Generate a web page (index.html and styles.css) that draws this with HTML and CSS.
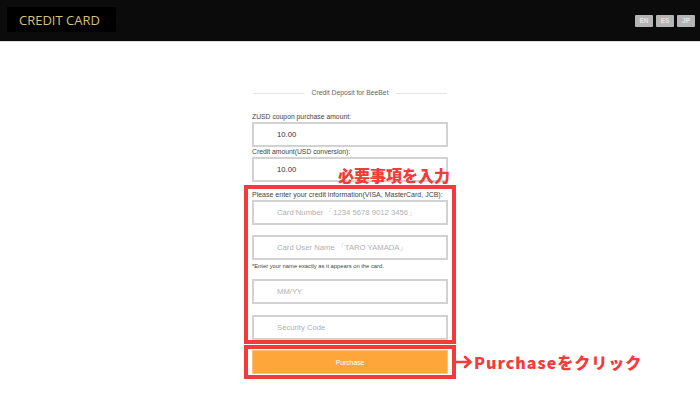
FILE: index.html
```html
<!DOCTYPE html>
<html lang="en">
<head>
<meta charset="utf-8">
<title>Credit Card</title>
<link rel="stylesheet" href="styles.css">
</head>
<body>
<header class="topbar">
  <div class="logo">CREDIT CARD</div>
  <nav class="langs">
    <span class="lang">EN</span>
    <span class="lang">ES</span>
    <span class="lang">JP</span>
  </nav>
</header>
<main class="form">
  <div class="title"><span class="rule"></span><span class="title-text">Credit Deposit for BeeBet</span><span class="rule"></span></div>
  <div class="label first">ZUSD coupon purchase amount:</div>
  <div class="field value">10.00</div>
  <div class="label">Credit amount(USD conversion):</div>
  <div class="field value">10.00</div>
  <section class="mark card-section">
    <div class="note-jp">必要事項を入力</div>
    <div class="label">Please enter your credit information(VISA, MasterCard, JCB):</div>
    <div class="field ph f-card">Card Number 「1234 5678 9012 3456」</div>
    <div class="field ph f-name">Card User Name 「TARO YAMADA」</div>
    <div class="hint">*Enter your name exactly as it appears on the card.</div>
    <div class="field ph f-exp">MM/YY</div>
    <div class="field ph f-cvc">Security Code</div>
  </section>
  <div class="mark buy-wrap">
    <button class="buy">Purchase</button>
    <div class="note-click">
      <svg class="arrow" width="17" height="14" viewBox="0 0 17 14"><path d="M0 7H14M9 2L14.5 7L9 12" fill="none" stroke="#f23b3b" stroke-width="2.6" stroke-linecap="round" stroke-linejoin="round"/></svg>
      <span>Purchaseをクリック</span>
    </div>
  </div>
</main>
</body>
</html>
```
FILE: styles.css
```css
html, body {
  margin: 0;
  padding: 0;
  background: #fff;
}
body {
  font-family: "Liberation Sans", Arial, sans-serif;
  width: 700px;
  height: 400px;
  overflow: hidden;
}
.topbar {
  height: 42px;
  background: #0b0b0b;
  display: flex;
  justify-content: space-between;
  align-items: flex-start;
  box-sizing: border-box;
  padding: 7px 5px 0 7px;
  border-bottom: 1px solid #d8d8d8;
}
.logo {
  width: 97px;
  height: 25px;
  padding-left: 12px;
  background: #000;
  color: #d7c077;
  font-family: "Open Sans", "Noto Sans", sans-serif;
  font-size: 13px;
  line-height: 26px;
}
.langs {
  display: flex;
  gap: 3px;
  margin-top: 8px;
}
.lang {
  width: 18px;
  height: 12px;
  background: #b4b4b4;
  color: #e6e6e6;
  font-size: 6.5px;
  font-weight: bold;
  line-height: 12px;
  text-align: center;
  border-radius: 1px;
}
.form {
  width: 196px;
  margin: 0 auto;
  padding-top: 46px;
}
.title {
  display: flex;
  align-items: center;
  height: 10px;
  gap: 6px;
}
.rule {
  flex: 1;
  height: 1px;
  background: #e4e4e4;
  margin: 0 1px;
}
.title-text {
  font-size: 6.8px;
  color: #666;
  line-height: 10px;
}
.label {
  font-size: 6.8px;
  line-height: 10px;
  color: #444;
  white-space: nowrap;
}
.label.first {
  margin-top: 14px;
}
.field {
  height: 25px;
  box-sizing: border-box;
  border: 2px solid #d2d2d2;
  padding-left: 23px;
  font-size: 7.7px;
  line-height: 21px;
  white-space: nowrap;
}
.value {
  color: #333;
}
.ph {
  color: #b0b0b0;
}
.mark {
  position: relative;
  border: 4px solid #f23b3b;
  margin: 0 -8px;
  padding: 0 4px;
}
.card-section {
  margin-top: 3px;
  padding-top: 1px;
}
.card-section .label {
  font-size: 7px;
}
.f-name {
  margin-top: 10px;
}
.hint {
  font-size: 5.8px;
  line-height: 10px;
  color: #444;
  margin-top: 1px;
}
.f-exp {
  margin-top: 8px;
}
.f-cvc {
  margin-top: 11px;
}
.buy-wrap {
  margin-top: 1px;
  padding-top: 1px;
  padding-bottom: 1px;
}
.buy {
  display: block;
  width: 100%;
  height: 24px;
  border: 1px solid #ffc27a;
  background: #ffa63b;
  color: #fff;
  font-family: "Liberation Sans", Arial, sans-serif;
  font-size: 6.8px;
  padding: 0;
}
.note-jp {
  position: absolute;
  right: 2px;
  bottom: calc(100% + 6px);
  color: #f23b3b;
  font-family: "Noto Sans CJK JP", sans-serif;
  font-weight: 900;
  font-size: 16px;
  line-height: 16px;
  white-space: nowrap;
}
.note-click {
  position: absolute;
  left: calc(100% + 4px);
  top: 50%;
  transform: translateY(-50%);
  display: flex;
  align-items: center;
  gap: 1px;
  color: #f23b3b;
  font-family: "Noto Sans CJK JP", sans-serif;
  font-weight: 900;
  font-size: 16px;
  line-height: 18px;
  letter-spacing: 1px;
  white-space: nowrap;
}
.arrow {
  display: block;
}
```
